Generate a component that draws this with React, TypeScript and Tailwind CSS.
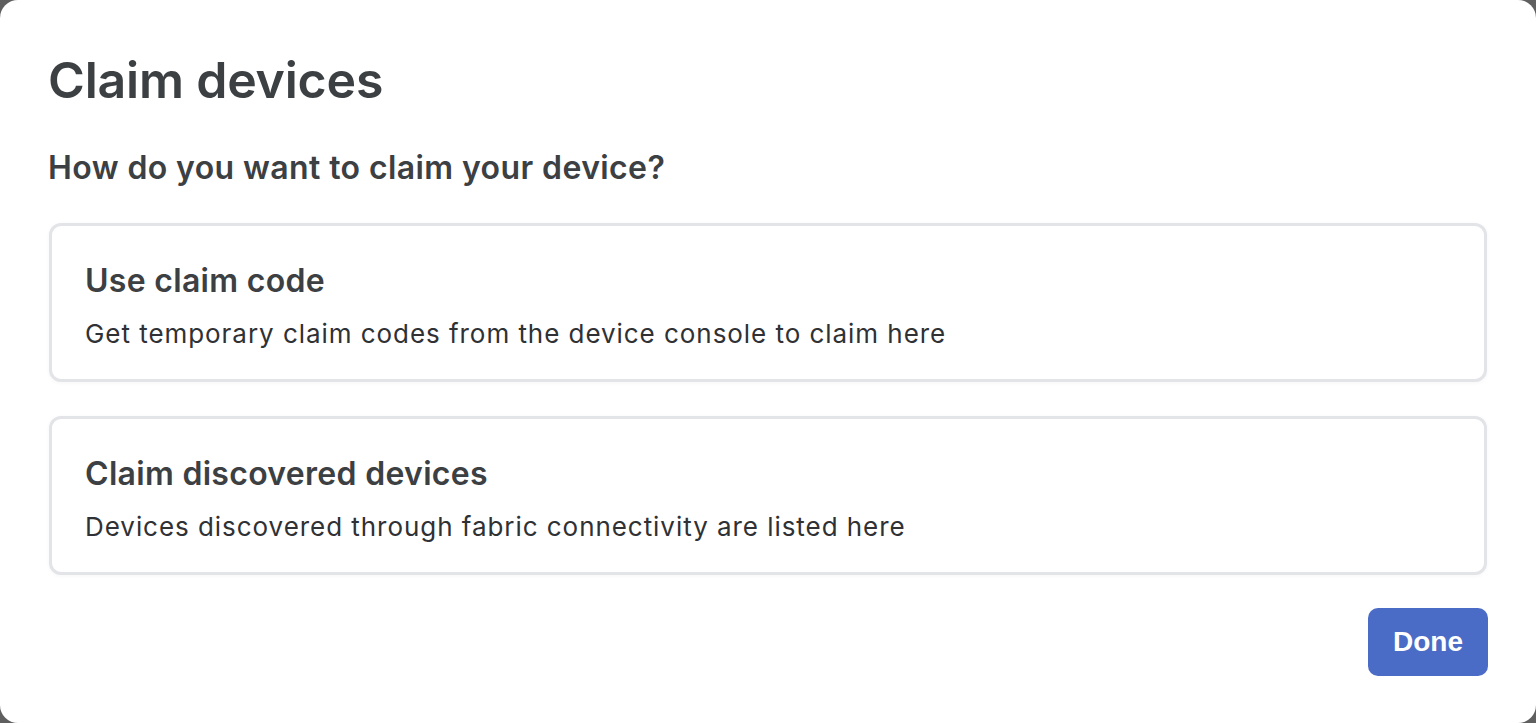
const options = [
  {
    title: "Use claim code",
    desc: "Get temporary claim codes from the device console to claim here",
  },
  {
    title: "Claim discovered devices",
    desc: "Devices discovered through fabric connectivity are listed here",
  },
];

export default function App() {
  return (
    <div className="h-[723px] w-full bg-[#5f5f5f]" style={{ fontFamily: "Inter, 'Noto Sans', sans-serif" }}>
      <div className="flex h-full flex-col rounded-[18px] bg-white px-12 pt-[50px] text-[#3c4043]">
        <h1 className="text-[50px] font-semibold leading-[60px] tracking-[-0.2px]">Claim devices</h1>
        <h2 className="mt-[40px] text-[32px] font-semibold leading-[36px] tracking-[0.4px]">
          How do you want to claim your device?
        </h2>
        <div className="mt-[37px] flex flex-col gap-[34px] pl-px pr-[1px]">
          {options.map((o) => (
            <button
              key={o.title}
              className="flex h-[159px] flex-col items-start rounded-[12px] border-[3px] border-[#e3e4e8] bg-white px-[33px] pt-[36px] text-left shadow-[0_1px_4px_rgba(0,0,0,0.04)]"
            >
              <span className="text-[32px] font-semibold leading-[38px] tracking-[0.3px]">{o.title}</span>
              <span className="mt-[19px] text-[26px] leading-[30px] tracking-[0.95px] text-[#2f3134]">{o.desc}</span>
            </button>
          ))}
        </div>
        <div className="mt-[33px] flex justify-end">
          <button
            className="h-[68px] w-[120px] rounded-[10px] bg-[#4a6bc6] text-[28px] font-bold text-white"
            style={{ fontFamily: "'Liberation Sans', Arial, sans-serif" }}
          >
            Done
          </button>
        </div>
      </div>
    </div>
  );
}
